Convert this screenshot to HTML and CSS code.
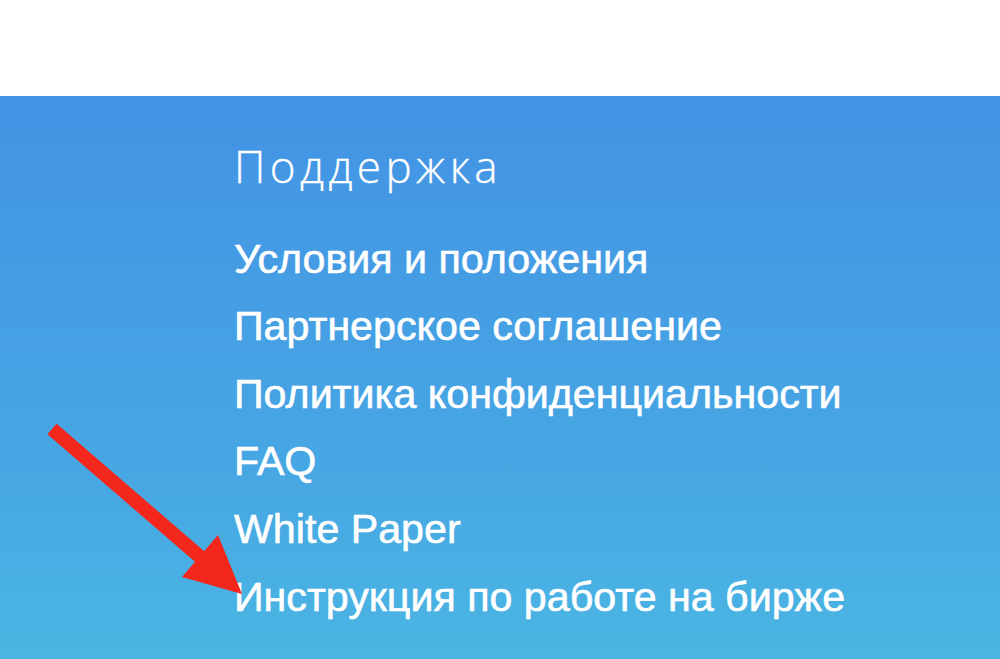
FILE: index.html
```html
<!DOCTYPE html>
<html lang="ru">
<head>
<meta charset="utf-8">
<link rel="stylesheet" href="styles.css">
</head>
<body>
<div class="top"></div>
<footer class="footer">
  <div class="col">
    <h2 class="title">Поддержка</h2>
    <ul class="links">
      <li><a href="#">Условия и положения</a></li>
      <li><a href="#">Партнерское соглашение</a></li>
      <li><a href="#">Политика конфиденциальности</a></li>
      <li><a href="#">FAQ</a></li>
      <li><a href="#">White Paper</a></li>
      <li><a href="#">Инструкция по работе на бирже</a></li>
    </ul>
  </div>
  <svg class="arrow" width="260" height="520" viewBox="0 0 260 520">
    <line x1="52" y1="333" x2="206" y2="466" stroke="#f3271c" stroke-width="14" stroke-linecap="butt"/>
    <polygon points="218,439 182,481 242,498" fill="#f3271c"/>
  </svg>
</footer>
</body>
</html>
```
FILE: styles.css
```css
html, body {
  margin: 0;
  padding: 0;
}
body {
  width: 1000px;
  height: 659px;
  overflow: hidden;
  background: #fff;
}
.top {
  height: 96px;
  background: #fff;
}
.footer {
  position: relative;
  height: 563px;
  background: linear-gradient(180deg, #4393e4 0%, #47a8e3 70%, #4ab6e3 100%);
  padding-left: 234px;
  box-sizing: border-box;
}
.col {
  padding-top: 42px;
}
.title {
  margin: 0 0 31.6px;
  font-family: "Open Sans", sans-serif;
  font-weight: 300;
  font-size: 44px;
  line-height: 56px;
  color: #fff;
  letter-spacing: 4.4px;
  -webkit-text-stroke: 0.3px #fff;
}
.links {
  list-style: none;
  margin: 0;
  padding: 0;
}
.links li {
  line-height: 67.6px;
  height: 67.6px;
}
.links a {
  font-family: "Liberation Sans", Arial, sans-serif;
  font-size: 41.2px;
  color: #fff;
  text-decoration: none;
  -webkit-text-stroke: 0.6px #fff;
}
.arrow {
  position: absolute;
  left: 0;
  top: 0;
}
```
